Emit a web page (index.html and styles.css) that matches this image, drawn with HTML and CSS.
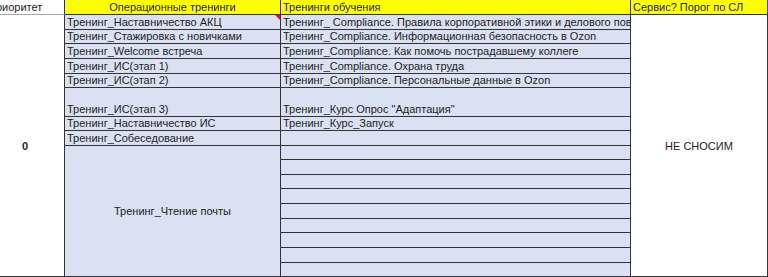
FILE: index.html
```html
<!DOCTYPE html>
<html lang="ru">
<head>
<meta charset="utf-8">
<title>Тренинги</title>
<link rel="stylesheet" href="styles.css">
</head>
<body>
<div class="sheet">
  <div class="cell hdr hdr-plain col1">Приоритет</div>
  <div class="cell hdr hdr-yellow col2 center">Операционные тренинги</div>
  <div class="cell hdr hdr-yellow col3">Тренинги обучения</div>
  <div class="cell hdr hdr-yellow col4">Сервис? Порог по СЛ</div>

  <div class="cell col1 body-all middle bold">0</div>
  <div class="cell col4 body-all middle">НЕ СНОСИМ</div>

  <div class="cell blue col2 comment">Тренинг_Наставничество АКЦ</div>
  <div class="cell blue col3">Тренинг_ Compliance. Правила корпоративной этики и делового поведения</div>
  <div class="cell blue col2">Тренинг_Стажировка с новичками</div>
  <div class="cell blue col3">Тренинг_Compliance. Информационная безопасность в Ozon</div>
  <div class="cell blue col2">Тренинг_Welcome встреча</div>
  <div class="cell blue col3">Тренинг_Compliance. Как помочь пострадавшему коллеге</div>
  <div class="cell blue col2">Тренинг_ИС(этап 1)</div>
  <div class="cell blue col3">Тренинг_Compliance. Охрана труда</div>
  <div class="cell blue col2">Тренинг_ИС(этап 2)</div>
  <div class="cell blue col3">Тренинг_Compliance. Персональные данные в Ozon</div>
  <div class="cell blue col2">Тренинг_ИС(этап 3)</div>
  <div class="cell blue col3">Тренинг_Курс Опрос "Адаптация"</div>
  <div class="cell blue col2">Тренинг_Наставничество ИС</div>
  <div class="cell blue col3">Тренинг_Курс_Запуск</div>
  <div class="cell blue col2">Тренинг_Собеседование</div>
  <div class="cell blue col3"></div>
  <div class="cell blue col2 span-rest middle center">Тренинг_Чтение почты</div>
  <div class="cell blue col3"></div>
  <div class="cell blue col3"></div>
  <div class="cell blue col3"></div>
  <div class="cell blue col3"></div>
  <div class="cell blue col3"></div>
  <div class="cell blue col3"></div>
  <div class="cell blue col3"></div>
  <div class="cell blue col3"></div>
  <div class="cell blue col3"></div>
</div>
</body>
</html>
```

FILE: styles.css
```css
html, body {
  margin: 0;
  padding: 0;
  background: #ffffff;
  overflow: hidden;
}

.sheet {
  display: grid;
  grid-template-columns: 79px 216px 350px 137px;
  grid-template-rows: 15px 15px 14px 15px 15px 14px 29px 14px 15px 14px 15px 14px 15px 15px 14px 15px 15px 14px;
  margin-left: -14px;
  width: max-content;
}

.cell {
  box-sizing: border-box;
  display: flex;
  align-items: flex-end;
  justify-content: flex-start;
  padding: 0 2px 1px;
  border-right: 1px solid #333333;
  border-bottom: 1px solid #333333;
  font-family: "Liberation Sans", Arial, sans-serif;
  font-size: 11px;
  line-height: 12px;
  color: #1e1e1e;
  white-space: nowrap;
  overflow: hidden;
  min-width: 0;
}

.col1 { grid-column: 1; }
.col2 { grid-column: 2; }
.col3 { grid-column: 3; }
.col4 { grid-column: 4; }

.hdr { grid-row: 1; }

.hdr-plain {
  background: #ffffff;
  border-bottom-color: #a6a6a6;
}

.hdr-yellow {
  background: #ffff00;
}

.body-all { grid-row: 2 / 19; }

.span-rest { grid-row: span 9; }

.blue { background: #d9e1f2; }

.center { justify-content: center; }

.middle {
  align-items: center;
  justify-content: center;
  padding-bottom: 0;
}

.bold { font-weight: bold; }

.comment { position: relative; }

.comment::after {
  content: "";
  position: absolute;
  top: 0;
  right: 0;
  border-top: 5px solid #e8141b;
  border-left: 5px solid transparent;
}
```
